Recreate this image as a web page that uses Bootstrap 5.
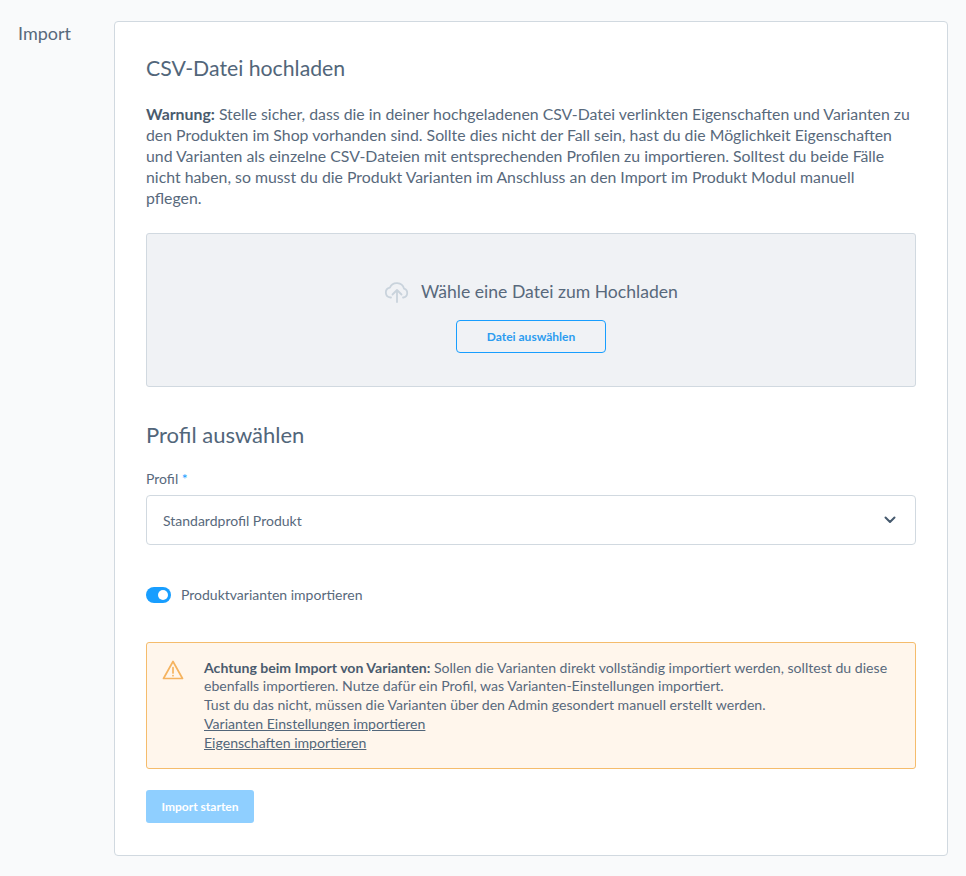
<!DOCTYPE html>
<html lang="de">
<head>
<meta charset="utf-8">
<link href="https://cdn.jsdelivr.net/npm/bootstrap@5.3.0/dist/css/bootstrap.min.css" rel="stylesheet">
<style>
html,body{height:100%}
body{background:#f9fafb;font-family:"Lato","Noto Sans",sans-serif;color:#58697c;font-size:15px;overflow:hidden}
.pg{padding:21px 18px 0 18px;gap:24px}
.side-label{width:72px;font-size:18px;line-height:24px;flex:none}
.main-card{border:1px solid #d1d9e0;border-radius:4px;background:#fff;padding:32px 31px 31px;flex:1;height:835px}
.sec-title{font-size:22px;font-weight:400;line-height:29px;margin:0 0 21px;color:#52667a}
.sec-first{font-size:21.25px;margin-bottom:20px}
.warn-text{font-size:15.83px;line-height:21px;margin:0 0 25px}
.warn-text b,.hint b{color:#4a5b6e;font-weight:700}
.drop{background:#f0f2f5;border:1px solid #d1d9e0;border-radius:3px;height:154px;margin-bottom:33px;padding-top:45px}
.drop-head{font-size:17.6px;line-height:26px;gap:11px;margin-bottom:15px;color:#58697c}
.pick{width:150px;height:33px;border:1px solid #189eff;border-radius:4px;color:#2c9cf0;font-size:12px;font-weight:700;background:transparent;padding:0}
.f-label{font-size:14px;line-height:18px;margin-bottom:7px}
.f-label span{color:#189eff}
.fake-select{height:50px;border:1px solid #d1d9e0;border-radius:4px;padding:0 19px 0 16px;font-size:14px;margin-bottom:40px}
.tog{font-size:14px;gap:10px;margin-bottom:37px;line-height:20px}
.sw{width:25px;height:16px;border-radius:8px;background:#189eff;flex:none;padding:3px 3px 3px 12px}
.sw i{display:block;width:10px;height:10px;border-radius:50%;background:#fff}
.hint{background:#fff6ec;border:1px solid #f5bc6c;border-radius:3px;padding:15.5px 16px 10px 15px;gap:20px;font-size:14.1px;line-height:18.8px;height:127px;margin-bottom:21px}
.hint a{color:#52667a}
.hint svg{flex-shrink:0;margin-top:1.5px}
.start{background:#8fcfff;color:#fff;font-size:12px;font-weight:700;border-radius:3px;border:0;width:108px;height:33px;padding:0}
</style>
</head>
<body>
<div class="pg d-flex align-items-start">
  <div class="side-label">Import</div>
  <div class="main-card">
    <h2 class="sec-title sec-first">CSV-Datei hochladen</h2>
    <p class="warn-text"><b>Warnung:</b> Stelle sicher, dass die in deiner hochgeladenen CSV-Datei verlinkten Eigenschaften und Varianten zu<br>den Produkten im Shop vorhanden sind. Sollte dies nicht der Fall sein, hast du die Möglichkeit Eigenschaften<br>und Varianten als einzelne CSV-Dateien mit entsprechenden Profilen zu importieren. Solltest du beide Fälle<br>nicht haben, so musst du die Produkt Varianten im Anschluss an den Import im Produkt Modul manuell<br>pflegen.</p>
    <div class="drop text-center">
      <div class="drop-head d-flex justify-content-center align-items-center">
        <svg width="26" height="24" viewBox="0 0 26 24" fill="none" stroke="#c9d3dc" stroke-width="1.8" stroke-linecap="round" stroke-linejoin="round"><path d="M7 17.5H6.5a5 5 0 0 1-.6-9.9A7.5 7.5 0 0 1 20 8.6a4.6 4.6 0 0 1-.5 8.9H19"/><path d="M13 22V10M8.5 14.5 13 10l4.500 4.500"/></svg>
        <span>Wähle eine Datei zum Hochladen</span>
      </div>
      <button class="btn pick" type="button">Datei auswählen</button>
    </div>
    <h2 class="sec-title">Profil auswählen</h2>
    <div class="f-label">Profil <span>*</span></div>
    <div class="fake-select d-flex justify-content-between align-items-center">
      <span>Standardprofil Produkt</span>
      <svg width="12" height="8" viewBox="0 0 12 8" fill="none" stroke="#465a6e" stroke-width="2" stroke-linecap="round" stroke-linejoin="round"><path d="M1.500 1.500 6 6l4.500-4.500"/></svg>
    </div>
    <div class="tog d-flex align-items-center"><span class="sw"><i></i></span><span>Produktvarianten importieren</span></div>
    <div class="hint d-flex">
      <svg width="22" height="20" viewBox="0 0 22 20" fill="none" stroke="#f5b35f" stroke-width="1.700" stroke-linecap="round" stroke-linejoin="round"><path d="M11 1.500 20.500 18.500H1.500Z"/><path d="M11 7.500v5.500M11 15.500v.2"/></svg>
      <div><b>Achtung beim Import von Varianten:</b> Sollen die Varianten direkt vollständig importiert werden, solltest du diese<br>ebenfalls importieren. Nutze dafür ein Profil, was Varianten-Einstellungen importiert.<br>Tust du das nicht, müssen die Varianten über den Admin gesondert manuell erstellt werden.<br><a href="#">Varianten Einstellungen importieren</a><br><a href="#">Eigenschaften importieren</a></div>
    </div>
    <button class="btn start" type="button">Import starten</button>
  </div>
</div>
<script src="https://cdn.jsdelivr.net/npm/bootstrap@5.3.0/dist/js/bootstrap.bundle.min.js"></script>
</body>
</html>
